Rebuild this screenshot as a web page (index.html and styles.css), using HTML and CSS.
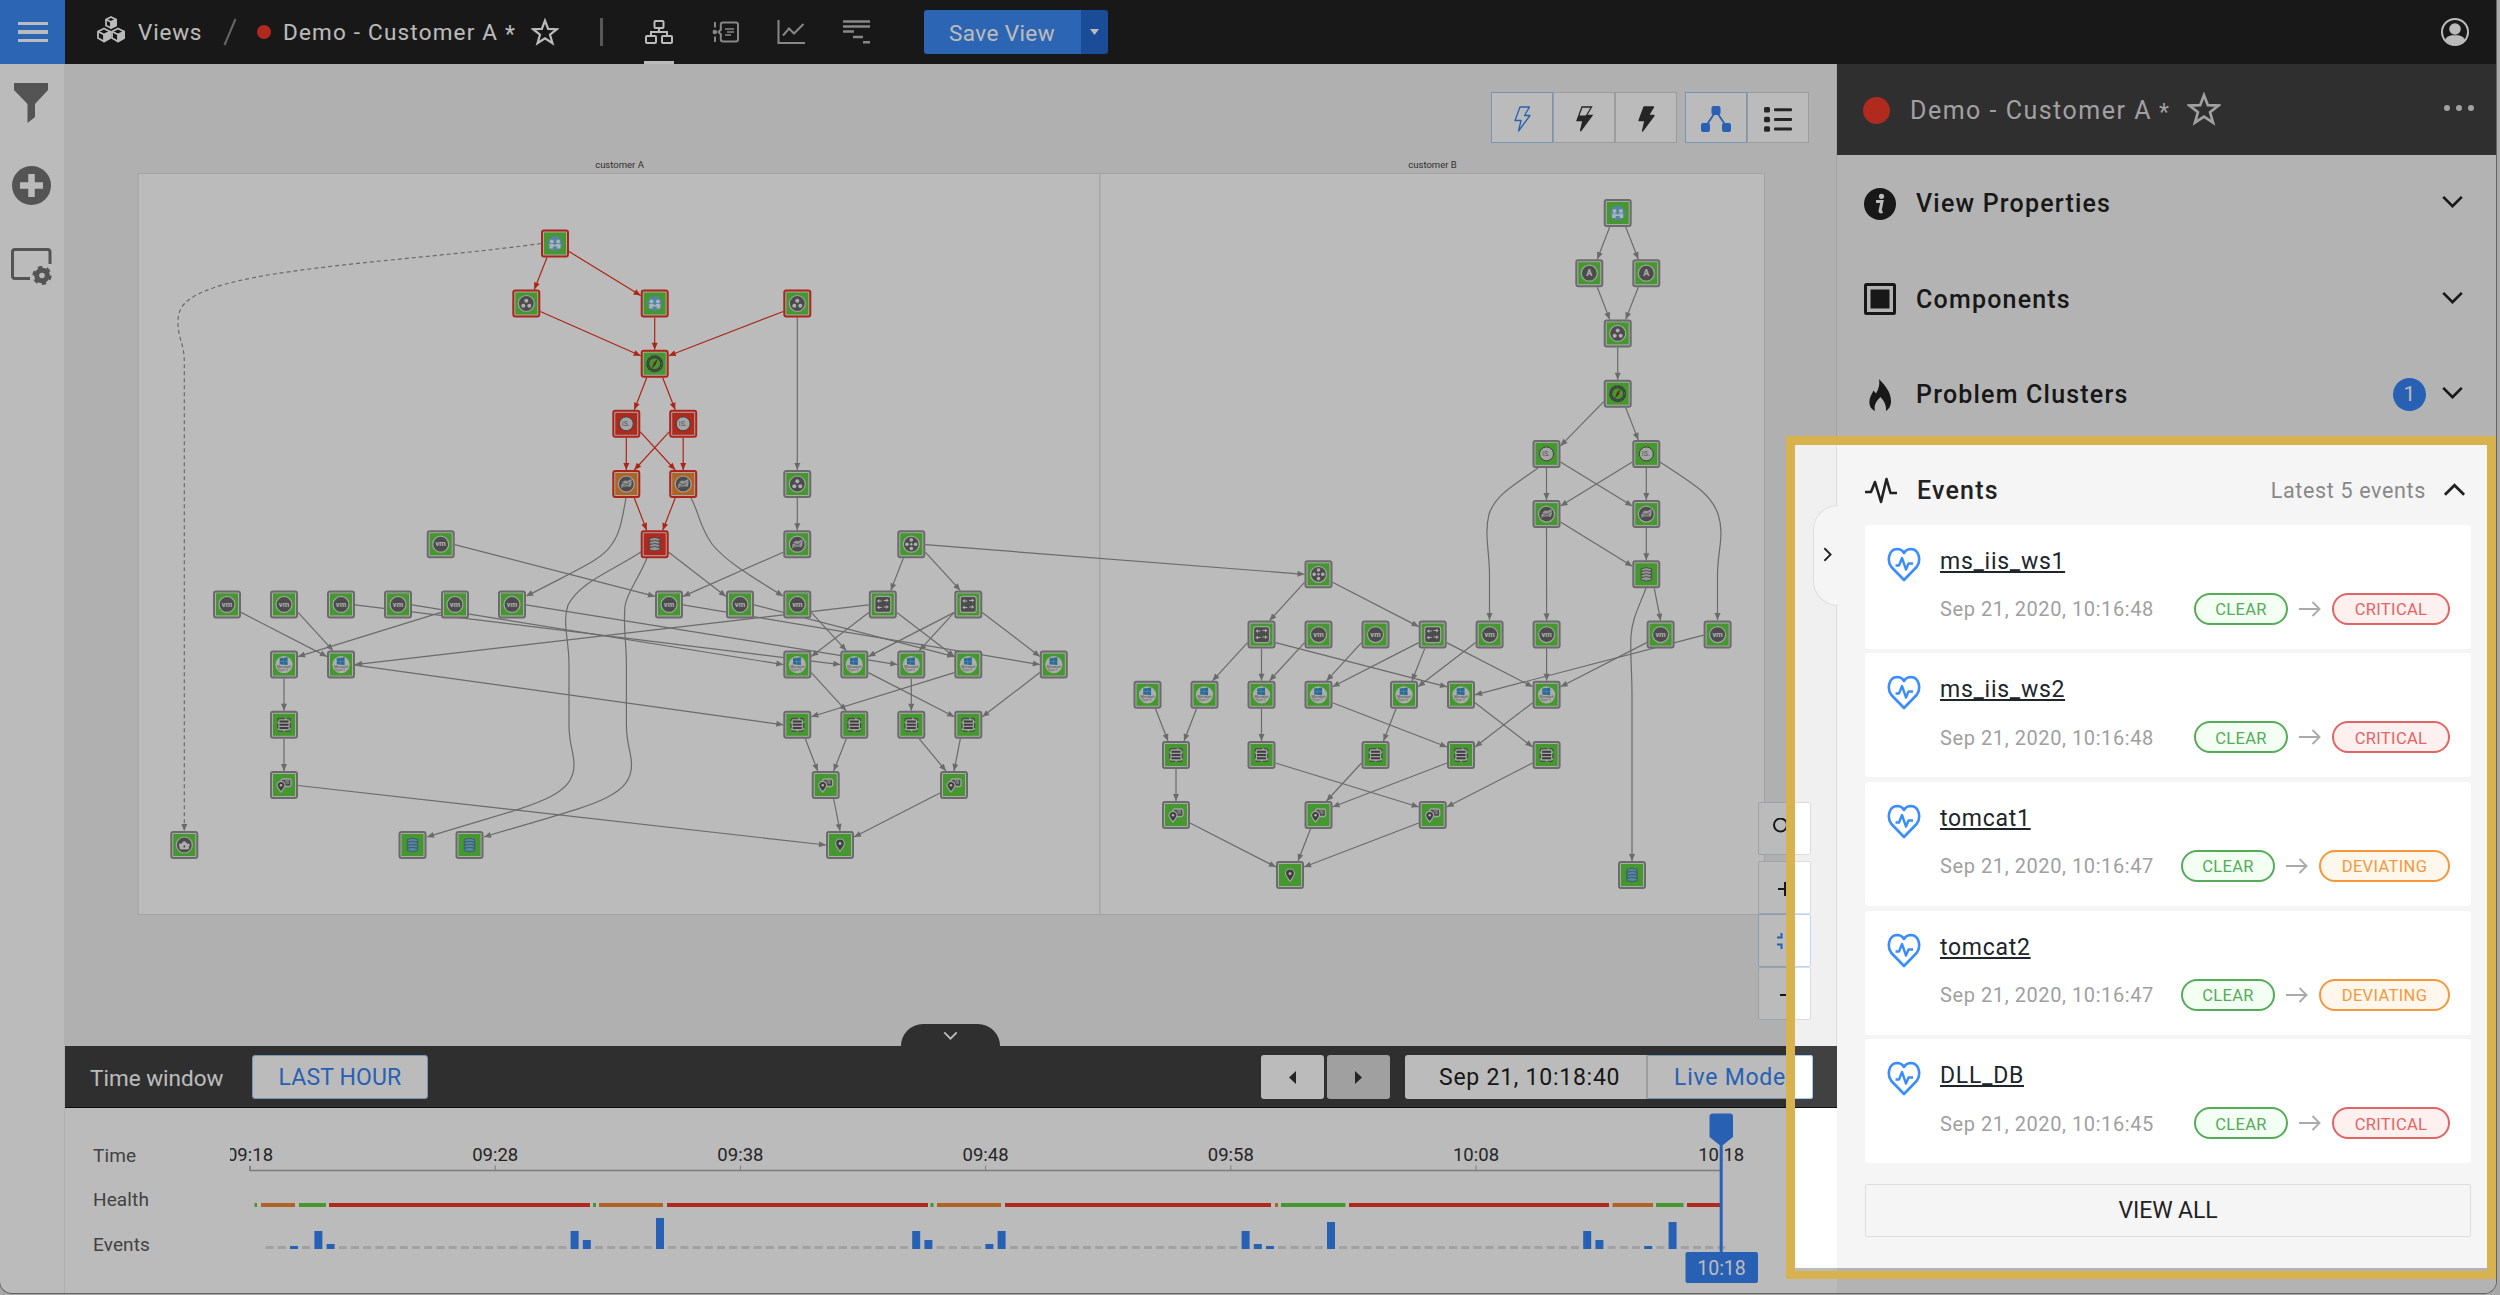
FILE: index.html
```html
<!DOCTYPE html>
<html lang="en">
<head>
<meta charset="utf-8">
<title>Demo - Customer A</title>
<link rel="stylesheet" href="styles.css">
</head>
<body>
<svg class="defs" width="0" height="0">
  <defs>
    <symbol id="star" viewBox="0 0 24 24"><path d="M12 2.2 14.7 9.3 22.2 9.6 16.3 14.3 18.4 21.6 12 17.4 5.6 21.6 7.7 14.3 1.8 9.6 9.3 9.3Z" fill="none" stroke="currentColor" stroke-width="1.9"/></symbol>
    <symbol id="chevron" viewBox="0 0 24 14"><path d="M2 2 12 12 22 2" fill="none" stroke="currentColor" stroke-width="2.9"/></symbol>
    <symbol id="heart" viewBox="0 0 34 35"><path d="M17 33 4.4 20C-.5 13.5 2 2.2 10 2c3.300 0 5.600 1.500 7 4 1.400-2.500 3.700-4 7-4 8 .2 10.500 11.500 5.600 18Z" fill="none" stroke="currentColor" stroke-width="2.600" stroke-linejoin="round"/><path d="M8.500 18.500H12l3-7.500 4 11.500 2.500-6H26" fill="none" stroke="currentColor" stroke-width="2.400" stroke-linejoin="round"/></symbol>
    <symbol id="arrow" viewBox="0 0 22 16"><path d="M0 8H20.500M13.500 1 20.500 8 13.500 15" fill="none" stroke="currentColor" stroke-width="1.900"/></symbol>
    <symbol id="bolt" viewBox="0 0 20 26"><path d="M8 1H17.500L12.500 9.500H18L6.500 25 9 14.500H3Z" stroke="currentColor" stroke-width="1.300" stroke-linejoin="round"/></symbol>
  </defs>
</svg>

<div class="window">
  <header class="topbar">
    <button class="burger"><i></i><i></i><i></i></button>
    <nav class="crumbs">
      <svg class="cubes" width="30" height="27" viewBox="0 0 30 27" fill="none" stroke="#fff" stroke-width="1.800" stroke-linejoin="round">
        <path d="M15 1 20 3.500V9.500L15 12 10 9.500V3.500ZM10 3.500 15 6 20 3.500M15 6V12"/><path d="M8 12.500 14 15.500V22L8 25.500 2 22V15.500ZM22 12.500 28 15.500V22L22 25.500 16 22V15.500Z"/><path d="M8 18.500 14 15.500V22L8 25.500ZM22 18.500 28 15.500V22L22 25.500ZM15 6 20 3.500V9.500L15 12Z" fill="#fff"/><path d="M2 15.500 8 18.500M16 15.500 22 18.500"/>
      </svg>
      <span class="views">Views</span>
      <svg class="slash" width="14" height="28" viewBox="0 0 14 28"><path d="M12.500 1 1.500 27" stroke="#8a8a8a" stroke-width="2"/></svg>
      <i class="dot"></i>
      <span class="title">Demo - Customer A</span>
      <span class="mod">*</span>
      <svg class="star" width="28" height="28"><use href="#star"/></svg>
    </nav>
    <i class="rule"></i>
    <nav class="tabs">
      <a class="tab active"><svg width="28" height="24" viewBox="0 0 28 24" fill="none" stroke="currentColor" stroke-width="2"><rect x="9.500" y="1" width="9" height="7" rx="1"/><rect x="1" y="16" width="10" height="7" rx="1"/><rect x="17" y="16" width="10" height="7" rx="1"/><path d="M14 8V12M6 16V12H22V16"/></svg></a>
      <a class="tab"><svg width="28" height="24" viewBox="0 0 28 24" fill="none" stroke="currentColor" stroke-width="2"><path d="M3 2V7.500M3 16.500V22"/><circle cx="2.800" cy="12" r="2.300" fill="currentColor" stroke="none"/><path d="M9.500 9 6.500 12 9.500 15M8.800 9.500V4.500Q8.800 2.500 10.800 2.500H24Q26 2.500 26 4.500V19.500Q26 21.500 24 21.500H10.800Q8.800 21.500 8.800 19.500V14.500"/><path d="M13 9H22M13 15H19M15 12H22" stroke-width="1.600"/></svg></a>
      <a class="tab"><svg width="28" height="24" viewBox="0 0 28 24" fill="none" stroke="currentColor" stroke-width="2"><path d="M1.500 0V23H28M6 15.500 12 8.500 17 13.500 26.500 4"/></svg></a>
      <a class="tab"><svg width="28" height="24" viewBox="0 0 28 24" fill="none" stroke="currentColor" stroke-width="2.600"><path d="M0 1.500H27M0 6.500H27M0 11.500H11M10 17H20M20 22.300H27"/></svg></a>
    </nav>
    <div class="save"><button class="save-main"><span>Save View</span></button><button class="save-more"><svg width="9" height="6"><path d="M0 0H9L4.500 6Z" fill="#fff"/></svg></button></div>
    <svg class="user" width="30" height="30" viewBox="0 0 30 30"><circle cx="15" cy="15" r="13" fill="none" stroke="#fff" stroke-width="2"/><circle cx="15" cy="12" r="5.800" fill="#fff"/><path d="M5 23C7 18.500 11 18.300 15 18.300S23 18.500 25 23C19.500 29 10.500 29 5 23Z" fill="#fff"/></svg>
  </header>

  <div class="body">
    <aside class="rail">
      <svg width="34" height="40" viewBox="0 0 34 40"><path d="M0 0H34V7L21 21V34L13.500 40V21L0 7Z" fill="#737373"/></svg>
      <svg width="39" height="39" viewBox="0 0 39 39"><circle cx="19.500" cy="19.500" r="19.500" fill="#737373"/><path d="M19.500 8V31M8 19.500H31" stroke="#fff" stroke-width="6.500"/></svg>
      <svg width="41" height="38" viewBox="0 0 41 38"><path d="M19 30.500H4Q1.500 30.500 1.500 28V4Q1.500 1.500 4 1.500H36.500Q39 1.500 39 4V16" fill="none" stroke="#737373" stroke-width="3"/><circle cx="31" cy="27.500" r="5.300" fill="none" stroke="#737373" stroke-width="5"/><circle cx="31" cy="27.500" r="7.800" fill="none" stroke="#737373" stroke-width="3.600" stroke-dasharray="4.200 3.968"/></svg>
    </aside>

    <main class="main">
      <section class="map">
        <svg id="graph" class="graph" width="1772" height="982" viewBox="65 64 1772 982"></svg>
        <div class="toolbar">
          <div class="group">
            <button class="on"><svg width="20" height="26" fill="none"><use href="#bolt"/></svg></button>
            <button><svg width="20" height="26" viewBox="0 0 20 26"><path d="M8 1H17.500L12.500 9.500H18L6.500 25 9 14.500H3Z" fill="none" stroke="currentColor" stroke-width="1.300"/><path d="M5 9.500H18L6.500 25 9 14.500H3Z" fill="currentColor"/></svg></button>
            <button><svg width="20" height="26" fill="currentColor"><use href="#bolt"/></svg></button>
          </div>
          <div class="group">
            <button class="on"><svg width="30" height="26" viewBox="0 0 30 26" fill="currentColor"><rect x="10.500" y="0" width="9" height="9" rx="2"/><rect x="0" y="17" width="9" height="9" rx="2"/><rect x="21" y="17" width="9" height="9" rx="2"/><path d="M15 5 5 20M15 5 25 20" stroke="currentColor" stroke-width="1.800"/></svg></button>
            <button><svg width="28" height="25" viewBox="0 0 28 25" fill="currentColor"><rect width="6" height="5.500" rx="1.500"/><rect y="9.700" width="6" height="5.500" rx="1.500"/><rect y="19.300" width="6" height="5.500" rx="1.500"/><rect x="10" y="1.300" width="18" height="3" rx="1"/><rect x="10" y="11" width="18" height="3" rx="1"/><rect x="10" y="20.600" width="18" height="3" rx="1"/></svg></button>
          </div>
        </div>
        <div class="zoom">
          <button class="search"><svg width="22" height="22" viewBox="0 0 22 22"><circle cx="8.500" cy="7" r="6.500" fill="none" stroke="#222" stroke-width="2"/></svg></button>
          <button class="plus"><svg width="16" height="16" viewBox="0 0 16 16"><path d="M8 1V15M1 8H15" stroke="#222" stroke-width="2"/></svg></button>
          <button class="fit"><svg width="18" height="18" viewBox="0 0 18 18"><path d="M1 5.500H5.500V1M12.500 1V5.500H17M1 12.500H5.500V17M12.500 17V12.500H17" fill="none" stroke="currentColor" stroke-width="2"/></svg></button>
          <button class="minus"><svg width="10" height="4"><rect y="1" width="10" height="2" fill="#222"/></svg></button>
        </div>
        <div class="drawer-tab"><svg width="15" height="9"><use href="#chevron"/></svg></div>
        <div class="side-tab"><svg class="turn" width="15" height="9"><use href="#chevron"/></svg></div>
      </section>

      <section class="timebar">
        <span class="tw">Time window</span>
        <button class="range"><span>LAST HOUR</span></button>
        <div class="steps"><button><svg width="7" height="13"><path d="M7 0V13L0 6.500Z" fill="#333"/></svg></button><button class="off"><svg width="7" height="13"><path d="M0 0V13L7 6.500Z" fill="#333"/></svg></button></div>
        <div class="clock"><span class="now"><b>Sep 21, 10:18:40</b></span><span class="live"><b>Live Mode</b></span></div>
      </section>

      <section class="timeline">
        <div class="labels"><span>Time</span><span>Health</span><span>Events</span></div>
        <svg id="chart" class="chart" width="1607" height="185" viewBox="230 1108 1607 185"></svg>
      </section>
    </main>

    <aside class="side">
      <div class="side-head"><i class="dot big"></i><span class="side-title">Demo - Customer A</span><span class="mod big">*</span><svg class="star" width="34" height="34"><use href="#star"/></svg><span class="more"><i></i><i></i><i></i></span></div>
      <div class="acc"><svg width="32" height="32" viewBox="0 0 32 32"><circle cx="16" cy="16" r="16" fill="#222"/><circle cx="17.500" cy="8.300" r="2.600" fill="#fff"/><path d="M12 13.500H18L16 23Q15.800 24.500 18.500 23.500" fill="none" stroke="#fff" stroke-width="3"/></svg><span>View Properties</span><svg class="chev" width="23" height="13"><use href="#chevron"/></svg></div>
      <div class="acc"><svg width="32" height="32" viewBox="0 0 32 32"><rect x="1.500" y="1.500" width="29" height="29" rx="1" fill="none" stroke="#222" stroke-width="3"/><rect x="6.500" y="6.500" width="19" height="19" fill="#222"/></svg><span>Components</span><svg class="chev" width="23" height="13"><use href="#chevron"/></svg></div>
      <div class="acc"><svg width="32" height="34" viewBox="0 0 32 34"><path d="M15 1C22 8 27 15 27 23 27 28 25 31 22 33 22.500 27 20 23 16.500 19 12.500 23 9.500 27 11 33 7 31 5 28 5.500 23 6 18 8 16 9.500 12.500L12 15.500C14.500 11 16 7 15 1Z" fill="#222"/></svg><span>Problem Clusters</span><em class="badge">1</em><svg class="chev" width="23" height="13"><use href="#chevron"/></svg></div>
      <section class="events">
        <div class="ev-head"><svg width="32" height="28" viewBox="0 0 32 28"><path d="M0 16H6L10 6 16 26 21.500 3 25.500 17H32" fill="none" stroke="#222" stroke-width="2.600" stroke-linejoin="round"/></svg><strong>Events</strong><span class="latest">Latest 5 events</span><svg class="chev flip" width="23" height="14"><use href="#chevron"/></svg></div>
        <article class="card"><svg class="heart" width="34" height="35"><use href="#heart"/></svg><div><a>ms_iis_ws1</a><p><time>Sep 21, 2020, 10:16:48</time><span class="pill ok">CLEAR</span><svg class="arr" width="22" height="16"><use href="#arrow"/></svg><span class="pill crit">CRITICAL</span></p></div></article>
        <article class="card"><svg class="heart" width="34" height="35"><use href="#heart"/></svg><div><a>ms_iis_ws2</a><p><time>Sep 21, 2020, 10:16:48</time><span class="pill ok">CLEAR</span><svg class="arr" width="22" height="16"><use href="#arrow"/></svg><span class="pill crit">CRITICAL</span></p></div></article>
        <article class="card"><svg class="heart" width="34" height="35"><use href="#heart"/></svg><div><a>tomcat1</a><p><time>Sep 21, 2020, 10:16:47</time><span class="pill ok">CLEAR</span><svg class="arr" width="22" height="16"><use href="#arrow"/></svg><span class="pill dev">DEVIATING</span></p></div></article>
        <article class="card"><svg class="heart" width="34" height="35"><use href="#heart"/></svg><div><a>tomcat2</a><p><time>Sep 21, 2020, 10:16:47</time><span class="pill ok">CLEAR</span><svg class="arr" width="22" height="16"><use href="#arrow"/></svg><span class="pill dev">DEVIATING</span></p></div></article>
        <article class="card"><svg class="heart" width="34" height="35"><use href="#heart"/></svg><div><a>DLL_DB</a><p><time>Sep 21, 2020, 10:16:45</time><span class="pill ok">CLEAR</span><svg class="arr" width="22" height="16"><use href="#arrow"/></svg><span class="pill crit">CRITICAL</span></p></div></article>
        <button class="all"><span>VIEW ALL</span></button>
      </section>
    </aside>
  </div>
</div>
<div class="spot"></div>
<div class="frame"></div>
<script src="app.js"></script>
</body>
</html>
```
FILE: styles.css
```css
* { box-sizing: border-box; }
body { margin: 0; width: 2500px; height: 1295px; overflow: hidden; position: relative; background: #e4e4e4; font-family: Roboto, "Liberation Sans", sans-serif; color: #222; }
button { font: inherit; letter-spacing: inherit; color: inherit; border: 0; padding: 0; margin: 0; background: none; display: flex; align-items: center; justify-content: center; }
b { font-weight: 400; }
i { display: block; }
svg { display: block; flex: none; }
.defs { position: absolute; }
.window { width: 2496px; height: 1293px; display: flex; flex-direction: column; border-radius: 0 0 12px 12px; overflow: hidden; background: #fff; box-shadow: 0 0 0 1px #888; }

.topbar { height: 64px; flex: none; background: #222; display: flex; align-items: center; color: #fff; font-size: 22.500px; }
.burger { width: 65px; height: 64px; background: #3d8af5; flex-direction: column; gap: 5px; }
.burger i { width: 30px; height: 3.500px; background: #fff; }
.crumbs { display: flex; align-items: center; width: 535px; padding-left: 31px; height: 64px; }
.cubes { margin: -5px 12px 0 0; }
.views { width: 65px; letter-spacing: .8px; }
.slash { margin: 0 20px; }
.dot { width: 14px; height: 14px; border-radius: 50%; background: #f03a28; margin-right: 12px; }
.title { width: 222px; letter-spacing: 1.200px; white-space: nowrap; }
.mod { font-size: 23px; line-height: 20px; width: 12px; padding-top: 5px; }
.crumbs .star { margin-left: 14px; }
.rule { width: 3px; height: 28px; background: #777; }
.tabs { display: flex; gap: 37.500px; height: 64px; margin-left: 41px; }
.tab { display: flex; align-items: center; justify-content: center; width: 28px; height: 64px; color: #b9b9b9; padding-bottom: 1px; }
.tab.active { color: #fff; width: 30px; border-bottom: 3px solid #fff; padding: 2px 0 0; }
.save { display: flex; height: 44px; margin-left: 53px; border-radius: 3px; overflow: hidden; letter-spacing: .400px; }
.save-main { width: 157px; background: #3d8af5; padding-top: 1px; }
.save-more { width: 27px; background: #2668cf; }
.user { margin-left: auto; margin-right: 26px; }

.body { display: flex; flex: 1; }
.rail { width: 65px; display: flex; flex-direction: column; align-items: center; padding: 19px 2px 0 0; gap: 43px; border-right: 1px solid #f0f0f0; }
.main { width: 1772px; display: flex; flex-direction: column; }
.map { height: 982px; position: relative; background: #f0f0f0; border-right: 1px solid #dedede; }
.group-box { fill: #fff; stroke: #dedede; stroke-width: 1; }
.group-name { font-size: 9.500px; fill: #444; text-anchor: middle; }
.toolbar { position: absolute; left: 1426px; top: 28px; display: flex; gap: 8px; }
.group { display: flex; }
.group button { width: 62px; height: 51px; background: #fff; border: 1px solid #d5d5d5; margin-left: 0; color: #333; padding-top: 3px; }
.group button.on { border-color: #a6cbf8; color: #3784f5; }
.zoom { position: absolute; left: 1693px; top: 738px; width: 53px; display: flex; flex-direction: column; }
.zoom button { height: 53px; background: #fff; border: 1px solid #d9dde2; border-radius: 2px; justify-content: flex-start; }
.search { margin-bottom: 6px; }
.zoom .search { padding-left: 13px; }
.zoom .plus { padding: 2px 0 0 18px; }
.zoom .fit { padding-left: 17px; border-color: #b5d8ff; color: #3784f5; }
.zoom .minus { padding: 2px 0 0 21px; }
.drawer-tab { position: absolute; left: 836px; top: 960px; width: 99px; height: 22px; background: #414141; border-radius: 22px 22px 0 0; display: flex; justify-content: center; padding-top: 7px; color: #fff; }
.side-tab { position: absolute; left: 1748px; top: 441px; width: 25px; height: 101px; background: #f5f5f5; border: 1px solid #dedede; border-right: 0; border-radius: 25px 0 0 25px; display: flex; align-items: center; justify-content: center; padding: 0 0 3px 2px; }
.turn { transform: rotate(-90deg); }

.timebar { height: 62px; background: #414141; display: flex; align-items: center; padding-left: 25px; font-size: 23px; border-bottom: 1px solid #111; }
.tw { color: #fff; width: 162px; font-size: 22.500px; padding-top: 2px; }
.range { width: 176px; height: 44px; background: #fff; border: 1px solid #a6cbf8; border-radius: 3px; color: #3784f5; letter-spacing: .150px; padding-top: 2px; }
.steps { display: flex; gap: 3px; margin-left: 833px; }
.steps button { width: 63px; height: 44px; background: #fff; border-radius: 3px; padding-top: 1px; }
.steps .off { background: #dadada; }
.clock { display: flex; margin-left: 15px; height: 44px; background: #fff; border-radius: 3px; letter-spacing: .750px; }
.clock span { display: flex; align-items: center; padding-top: 2px; }
.now { width: 243px; padding-left: 34px; border-right: 2px solid #d8d8d8; }
.live { width: 165px; padding-left: 26px; border: 1px solid #a6cbf8; border-left: 0; border-radius: 0 3px 3px 0; color: #3784f5; }

.timeline { flex: 1; background: #fff; display: flex; }
.labels { width: 165px; padding: 34.500px 0 0 28px; display: flex; flex-direction: column; font-size: 19px; letter-spacing: .120px; color: #5a5a5a; }
.labels span { height: 44.500px; line-height: 26px; align-self: flex-start; }
.tick { font-size: 18.500px; fill: #333; text-anchor: middle; }

.side { width: 659px; background: #f5f5f5; }
.side-head { height: 91px; background: #414141; display: flex; align-items: center; padding: 2px 22px 0 25px; color: #dcdcdc; font-size: 25px; }
.dot.big { width: 27px; height: 27px; margin: 0 20px 0 1px; }
.side-title { width: 249px; letter-spacing: 1.500px; white-space: nowrap; }
.mod.big { width: 14px; }
.side-head .star { margin: -3px 0 0 14px; }
.more { display: flex; gap: 6px; margin-left: auto; padding-bottom: 6px; }
.more i { width: 6px; height: 6px; border-radius: 50%; background: #dcdcdc; }
.acc { height: 95.500px; display: flex; align-items: center; padding: 2px 32px 0 27px; font-size: 25px; font-weight: 500; letter-spacing: 1.200px; }
.acc span { margin-left: 20px; }
.acc .chev { margin-left: auto; margin-bottom: 4px; }
.badge { margin-left: auto; width: 33px; height: 33px; border-radius: 50%; background: #3784f5; color: #fff; font: 400 21px/33px Roboto, sans-serif; letter-spacing: 0; text-align: center; }
.acc .badge + .chev { margin-left: 15px; }
.events { padding: 0 25px 0 28px; display: flex; flex-direction: column; }
.ev-head { height: 83px; display: flex; align-items: center; padding: 14px 5px 0 0; font-size: 25px; }
.ev-head strong { margin-left: 20px; font-weight: 500; letter-spacing: 1.200px; }
.latest { margin-left: auto; font-size: 21.500px; letter-spacing: .650px; color: #888; padding-top: 1px; }
.ev-head .chev { margin-left: 17px; }
.flip { transform: rotate(180deg); }
.card { height: 124px; margin-bottom: 4.700px; background: #fff; border-radius: 4px; display: flex; padding: 22px 21px 0 22px; }
.heart { color: #3a8dff; }
.card > div { flex: 1; margin-left: 19px; }
.card a { font-size: 23px; line-height: 28px; letter-spacing: .720px; text-decoration: underline; color: #20252b; display: inline-block; margin-top: 1px; }
.card p { margin: 17px 0 0; display: flex; align-items: center; }
.card time { font-size: 20px; letter-spacing: .580px; color: #a0a0a0; margin-right: auto; padding-top: 1px; }
.arr { margin: 0 11px; color: #aaa; }
.pill { height: 32px; border: 2px solid; border-radius: 16px; font-size: 16.500px; letter-spacing: .350px; display: flex; align-items: center; justify-content: center; padding-top: 2px; }
.ok { width: 94px; color: #56ab5a; background: #f2fff2; }
.crit { width: 118px; color: #e36464; background: #fff0f0; }
.dev { width: 131px; color: #f5973c; background: #fff7ec; }
.all { height: 53px; margin-top: 16px; border: 1px solid #ddd; border-radius: 2px; font-size: 23px; letter-spacing: -.1px; padding-top: 1px; }

.spot { position: absolute; left: 1795px; top: 444px; width: 692px; height: 824px; box-shadow: 0 0 0 2500px rgba(0, 0, 0, .267); }
.frame { position: absolute; left: 1786px; top: 436px; width: 710px; height: 843px; border: 9px solid #d7b24f; border-bottom-width: 8px; }
```
FILE: app.js
```js
const GRAY = '#929292', RED = '#ec3322';
const ink = '#686868', lite = '#ddd';
const ring = `<circle r="8" fill="${ink}" stroke="${lite}" stroke-width="1.200"/>`;
const disks = (f, s) => [-4.500, -1.500, 1.500, 4.500].map(y => `<path d="M-5.300 ${y - 1}Q0 ${y - 3.500} 5.300 ${y - 1}V${y + 1}Q0 ${y + 3.500}-5.300 ${y + 1}Z" fill="${f}" stroke="${s}" stroke-width=".8"/>`).join('');
const glyphs = {
  biz: '<circle r="7.500" fill="#74b4dc"/><g fill="#e8f4fb"><circle cx="-3.200" cy="-2" r="2"/><circle cx="3.200" cy="-2" r="2"/><path d="M-5.500 .5H-1V1.500H1V.5H5.500V5H2V3H-2V5H-5.500Z"/></g>',
  dots: ring + `<g fill="#eee"><circle cy="-2.800" r="2"/><circle cx="-3" cy="2.300" r="2"/><circle cx="3" cy="2.300" r="2"/></g>`,
  compass: `<circle r="7" fill="none" stroke="#555" stroke-width="3"/><circle r="7" fill="none" stroke="#8b8" stroke-width=".6" stroke-dasharray="1.500 2"/><path d="M3-5 1 1-3 5-1-1Z" fill="#8d3a22"/>`,
  iis: '<circle r="7" fill="#e2e2e2" stroke="#555" stroke-width="1"/><text x="-.5" y="2.500" font-size="7" fill="#777" text-anchor="middle">IS.</text>',
  tom: ring + '<path d="M-5 1Q-3-5 1-3L5-5Q6 0 4 3 0 1-5 4Z" fill="#ccc"/><path d="M-5-1 3 1M-4 3 4-2" stroke="#777" stroke-width=".8"/>',
  db: disks('#ccc', '#555'),
  dbb: disks('#74b8de', '#4f7288'),
  vm: ring + '<text y="2.200" font-size="7.500" font-weight="700" fill="#eee" text-anchor="middle">vm</text>',
  quad: ring + '<g fill="#eee"><circle cy="-4.300" r="1.800"/><circle cy="4.300" r="1.800"/><circle cx="-4.300" r="1.800"/><circle cx="4.300" r="1.800"/><circle r="1.200"/></g>',
  sw: `<rect x="-8" y="-8" width="16" height="16" rx="2.500" fill="${ink}" stroke="${lite}" stroke-width="1.200"/><g fill="#eee"><path d="M-6-3.500 -3.500-5.300V-4H-1V-3H-3.500V-1.700ZM6-4 3.500-5.800V-4.500H1V-3.500H3.500V-2.200ZM-6 3 -3.500 1.200V2.500H-1V3.500H-3.500V4.800ZM6 2.500 3.500 .7V2H1V3H3.500V4.300Z"/></g>`,
  win: '<circle r="8.600" fill="#ececec"/><path d="M-4.300-6.300-.6-6.800V-3.600H-4.300ZM-.4-6.900 3.600-7.400V-3.600H-.4ZM-4.300-3.400H-.6V.1L-4.300-.3ZM-.4-3.400H3.600V.5L-.4 .1Z" fill="#3a94cf"/><text y="3.600" font-size="3.300" fill="#666" text-anchor="middle">Microsoft</text><text x="-1" y="6.400" font-size="2.800" fill="#888" text-anchor="middle">Hyper-V</text>',
  srv: `<rect x="-6.300" y="-6.300" width="12.600" height="12.600" rx="2" fill="${lite}" stroke="${ink}" stroke-width="1.300" stroke-dasharray="5 2"/><path d="M-4.500-3.200H4.500M-4.500 0H4.500M-4.500 3.200H4.500" stroke="#555" stroke-width="2"/>`,
  loc: `<rect x="-3" y="-6" width="10" height="7.500" rx="1.500" fill="${ink}" stroke="${lite}" stroke-width="1.300"/><path d="M1-4H5M2-2H5" stroke="${lite}"/><path d="M-3 7C-6.500 3-7 2-7 .3A4 4 0 0 1 1 .3C1 2 .5 3-3 7Z" fill="#555" stroke="${lite}" stroke-width="1.200"/><circle cx="-3" cy=".3" r="1.300" fill="#eee"/>`,
  pin: `<path d="M0 6.500C-4 1-4.500 0-4.500-1.500A4.500 4.500 0 0 1 4.500-1.500C4.500 0 4 1 0 6.500Z" fill="#555" stroke="${lite}" stroke-width="1.200"/><circle cy="-1.500" r="1.500" fill="#eee"/>`,
  bag: ring + '<path d="M-5-1H5L4 4H-4ZM-2.500-1Q0-6 2.500-1" fill="#eee" stroke="#eee" stroke-width=".8"/><circle cy="1.500" r="1" fill="#555"/>',
  app: ring + '<text y="3.200" font-size="9" font-weight="700" fill="#eee" text-anchor="middle">A</text>'
};
// id: x, y, glyph, red border, fill key
const N = {};
const rows = (pfx, y, glyph, xs) => xs.forEach((x, i) => { N[pfx + i] = [x, y, glyph]; });
const FILL = { g: '#5ecf40', r: '#f0382a', o: '#f08930' };
Object.assign(N, {
  a1: [555, 243.500, 'biz', 1], a2: [526.300, 303.500, 'dots', 1], a3: [654.700, 303.500, 'biz', 1], a4: [797.300, 303.500, 'dots', 1],
  a5: [654.700, 363.700, 'compass', 1], a6: [626.300, 423.800, 'iis', 1, 'r'], a7: [683.200, 423.800, 'iis', 1, 'r'],
  a8: [626.300, 484, 'tom', 1, 'o'], a9: [683.200, 484, 'tom', 1, 'o'], a10: [797.300, 484, 'dots'],
  a11: [654.700, 544.200, 'db', 1, 'r'], a12: [797.300, 544.200, 'tom'], a13: [911.300, 544.200, 'quad'], a14: [440.700, 544.200, 'vm'],
  sA: [882.800, 604.400, 'sw'], sB: [968.300, 604.400, 'sw'],
  bag: [184.300, 845, 'bag'], d1: [412.500, 845, 'dbb'], d2: [469.500, 845, 'dbb'], pA: [840, 845, 'pin'],
  b1: [1617.700, 213, 'biz'], b2: [1589.300, 273.200, 'app'], b3: [1646.300, 273.200, 'app'], b4: [1617.700, 333.400, 'dots'],
  b5: [1617.700, 393.700, 'compass'], b6: [1546.500, 453.900, 'iis'], b7: [1646.300, 453.900, 'iis'],
  b8: [1546.500, 514.100, 'tom'], b9: [1646.300, 514.100, 'tom'], b10: [1646.300, 574.300, 'db'], b11: [1318.500, 574.300, 'quad'],
  sC: [1261.500, 634.600, 'sw'], sD: [1432.700, 634.600, 'sw'], d3: [1632, 875, 'dbb'], pB: [1290, 875, 'pin']
});
rows('v', 604.400, 'vm', [227, 284, 341, 398, 455, 512, 669, 740, 797.300]);
rows('w', 664.600, 'win', [284, 341, 797.300, 854.300, 911.300, 968.300, 1053.800]);
rows('s', 724.800, 'srv', [284, 797.300, 854.300, 911.300, 968.300]);
rows('l', 785, 'loc', [284, 825.700, 954]);
rows('V', 634.600, 'vm', [1318.500, 1375.500, 1489.600, 1546.600, 1660.600, 1717.600]);
rows('W', 694.800, 'win', [1147.500, 1204.500, 1261.500, 1318.500, 1404, 1461, 1546.600]);
rows('S', 755, 'srv', [1176, 1261.500, 1375.500, 1461, 1546.600]);
rows('L', 815, 'loc', [1176, 1318.500, 1432.700]);

const redEdges = 'a1-a2 a1-a3 a2-a5 a3-a5 a4-a5 a5-a6 a5-a7 a6-a8 a6-a9 a7-a8 a7-a9 a8-a11 a9-a11';
const grayEdges = 'a4-a10 a10-a12 a12-v6 a14-v6 a11-v7 a13-sA a13-sB a13-b11 v0-w1 v1-w1 v4-w0 v2-w3 v3-w2 v5-w4 v6-w6 v7-w5 v8-w3 sA-w1 sA-w2 sA-w5 sB-w3 sB-w4 sB-w6 w0-s0 w1-s1 w2-s2 w3-s4 w4-s3 w5-s1 w6-s4 s0-l0 s1-l1 s2-l1 s3-l2 s4-l2 l0-pA l1-pA l2-pA'
  + ' b1-b2 b1-b3 b2-b4 b3-b4 b4-b5 b5-b6 b5-b7 b6-b8 b6-b9 b7-b8 b7-b9 b8-V3 b8-b10 b9-b10 b10-V4 b11-sC b11-sD sC-W1 sC-W2 sC-W5 V0-W2 V1-W3 sD-W3 sD-W4 sD-W6 V2-W4 V3-W6 V4-W6 V5-W5 W0-S0 W1-S0 W2-S1 W3-S3 W4-S2 W5-S4 W6-S3 S0-L0 S1-L2 S2-L1 S3-L1 S4-L2 L0-pB L1-pB L2-pB';

const head = (x, y, a, c) => `<path d="M0 0-7-3V3Z" fill="${c}" transform="translate(${x} ${y}) rotate(${a})"/>`;
function edge(pair, c) {
  const [p, q] = pair.split('-').map(k => N[k]);
  const dx = q[0] - p[0], d = Math.abs(dx), s = Math.sign(dx), h = 14;
  let x1, y1, x2, y2;
  if (d < 2) { x1 = p[0]; y1 = p[1] + h; x2 = q[0]; y2 = q[1] - h; }
  else {
    if (d < 50) { x1 = p[0] + 8 * s; y1 = p[1] + h; } else { x1 = p[0] + h * s; y1 = p[1] + (d > 210 ? .5 : 8); }
    if (d < 20) { x2 = q[0]; y2 = q[1] - h; } else if (d < 65) { x2 = q[0] - 8 * s; y2 = q[1] - h; } else { x2 = q[0] - h * s; y2 = q[1] - (d > 250 ? 0 : 8); }
  }
  return `<path d="M${x1} ${y1}L${x2} ${y2}" stroke="${c}"/>` + head(x2, y2, Math.atan2(y2 - y1, x2 - x1) * 180 / Math.PI, c);
}
// path, arrowhead x, y, angle, dash
const curves = [
  ['M541 243.500C430 259 275 266 213 288 185 298 178 307 178 322 178 340 184.300 342 184.300 363V831', 184.300, 831, 90, '4 3'],
  ['M626 498C622 520 620 533 612 544 602 560 580 568 527 596', 526, 596, 154],
  ['M691 498C699 512 699 526 712 544 724 559 742 571 783 596', 783, 596, 31],
  ['M641 552C610 572 580 582 568 605 562 622 569 640 569 664V725C569 745 574 752 574 765 574 800 525 806 427 837', 427, 837, 162],
  ['M647 558C638 580 627 592 625 606 623 630 626.400 640 626.400 664V725C626.400 745 631.500 752 631.500 765 631.500 800 585 806 484 837', 484, 837, 162],
  ['M1538 468C1510 488 1496 495 1489 514 1484 535 1489.500 550 1489.500 575V620', 1489.500, 620, 90],
  ['M1660 462C1690 482 1710 492 1718 514 1725 535 1717.500 550 1717.500 575V620', 1717.500, 620, 90],
  ['M1646 588C1640 605 1632 618 1631 636 1630 655 1632 670 1632 695V861', 1632, 861, 90]
];
let g = '<rect class="group-box" x="138" y="173.500" width="962" height="741"/><rect class="group-box" x="1100" y="173.500" width="664.500" height="741"/><text class="group-name" x="619.500" y="168">customer A</text><text class="group-name" x="1432.500" y="168">customer B</text><g fill="none" stroke-width="1.200">';
curves.forEach(([d, x, y, a, dash]) => { g += `<path d="${d}" stroke="${GRAY}"${dash ? ` stroke-dasharray="${dash}"` : ''}/>` + head(x, y, a, GRAY); });
grayEdges.split(' ').forEach(e => { g += edge(e, GRAY); });
redEdges.split(' ').forEach(e => { g += edge(e, RED); });
g += '</g>';
for (const k in N) {
  const [x, y, t, red, f] = N[k];
  g += `<g transform="translate(${x} ${y})"><rect x="-13" y="-13" width="26" height="26" rx="2" fill="#e8e8e8" stroke="${red ? RED : GRAY}" stroke-width="2"/><rect x="-11" y="-11" width="22" height="22" fill="${FILL[f || 'g']}"/>${glyphs[t]}</g>`;
}
document.getElementById('graph').innerHTML = g;

// Timeline: ticks, health segments, event counts
let c = '<path d="M250 1166V1170.500H1721" fill="none" stroke="#aaa" stroke-width="1.500"/>';
['09:18', '09:28', '09:38', '09:48', '09:58', '10:08', '10:18'].forEach((t, i) => {
  const x = 250 + i * 245.200;
  c += `<path d="M${x} 1165.500V1171" stroke="#aaa"/><text class="tick" x="${x}" y="1161">${t}</text>`;
});
const health = [[254.500, 257, 'g'], [261, 295, 'o'], [299, 326, 'g'], [329, 590, 'r'], [593, 596, 'g'], [599, 663, 'o'], [667, 928, 'r'], [930.500, 933.500, 'g'], [937, 1001, 'o'], [1005, 1271, 'r'], [1275, 1278, 'o'], [1281, 1345.500, 'g'], [1349, 1609, 'r'], [1612.500, 1653, 'o'], [1656, 1683.500, 'g'], [1687, 1721, 'r']];
health.forEach(([a, b, k]) => { c += `<rect x="${a}" y="1203" width="${b - a}" height="4" fill="${FILL[k]}"/>`; });
const counts = { 2: 3, 4: 18, 5: 5, 25: 18, 26: 9, 32: 31, 53: 18, 54: 9, 59: 5, 60: 18, 80: 18, 81: 5, 82: 3, 87: 27, 108: 18, 109: 9, 113: 3, 115: 27 };
for (let k = 0; k < 120; k++) {
  const h = counts[k] || 3;
  c += `<rect x="${265.600 + 12.200 * k}" y="${1249 - h}" width="8" height="${h}" fill="${counts[k] ? '#3784f5' : '#dcdcdc'}"/>`;
}
c += '<g fill="#3784f5"><path d="M1713 1113.500H1730Q1733 1113.500 1733 1116.500V1137L1723 1145H1719.500L1709.500 1137V1116.500Q1709.500 1113.500 1713 1113.500Z"/><rect x="1719.700" y="1140" width="3" height="114"/><rect x="1685.500" y="1252" width="72.500" height="31" rx="2"/></g><text x="1721.500" y="1275" font-size="19.500" fill="#fff" text-anchor="middle">10:18</text>';
document.getElementById('chart').innerHTML = c;
```
